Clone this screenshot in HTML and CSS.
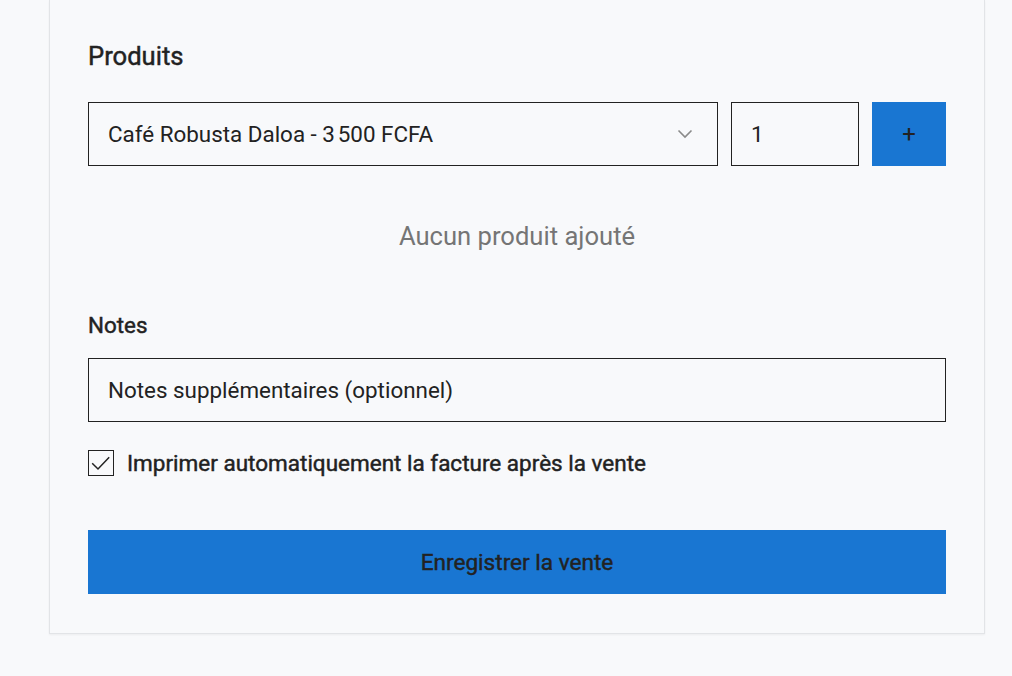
FILE: index.html
```html
<!DOCTYPE html>
<html lang="fr">
<head>
<meta charset="utf-8">
<link rel="stylesheet" href="styles.css">
</head>
<body>
<div class="page">
  <section class="card">
    <h2 class="section-title">Produits</h2>
    <div class="product-row">
      <div class="select">
        <span class="select-text">Café Robusta Daloa - 3&#8239;500 FCFA</span>
        <svg class="chevron" width="16" height="10" viewBox="0 0 16 10"><path d="M1.5 1.5 L8 8 L14.5 1.5" fill="none" stroke="#8a8a8a" stroke-width="1.6"/></svg>
      </div>
      <div class="qty">1</div>
      <button class="add-btn">+</button>
    </div>
    <p class="empty">Aucun produit ajouté</p>
    <h3 class="field-label">Notes</h3>
    <div class="notes">Notes supplémentaires (optionnel)</div>
    <label class="check-row">
      <span class="checkbox"><svg width="24" height="24" viewBox="0 0 24 24"><path d="M3.2 12.2 L9 18 L20.2 6.2" fill="none" stroke="#222" stroke-width="1.5"/></svg></span>
      <span class="check-label">Imprimer automatiquement la facture après la vente</span>
    </label>
    <button class="submit">Enregistrer la vente</button>
  </section>
</div>
</body>
</html>
```

FILE: styles.css
```css
* { box-sizing: border-box; }
html, body {
  margin: 0;
  background: #f8f9fb;
  font-family: Roboto, "Liberation Sans", sans-serif;
  color: #222;
}
.page {
  padding: 0 27px 0 49px;
  height: 676px;
  overflow: hidden;
}
.card {
  width: 936px;
  background: #f8f9fb;
  border: 1px solid #e2e4e7;
  border-top: none;
  box-shadow: 0 1px 2px rgba(0,0,0,0.05);
  padding: 38px 38px 39px 38px;
}
.section-title,
.field-label,
.check-label,
.submit {
  font-weight: 400;
  -webkit-text-stroke: 0.45px currentColor;
}
.section-title {
  margin: 0;
  font-size: 25.6px;
  line-height: 36px;
}
.product-row {
  display: flex;
  gap: 13px;
  margin-top: 28px;
}
.select {
  flex: 1;
  height: 64px;
  border: 1px solid #222;
  display: flex;
  align-items: center;
  justify-content: space-between;
  padding: 0 24px 0 19px;
  font-size: 22.4px;
}
.chevron { display: block; }
.qty {
  width: 128px;
  height: 64px;
  border: 1px solid #222;
  display: flex;
  align-items: center;
  padding-left: 19px;
  font-size: 22.4px;
}
.add-btn {
  width: 74px;
  height: 64px;
  border: none;
  background: #1976d2;
  color: #222;
  font-family: inherit;
  font-size: 24px;
  padding: 0;
}
.empty {
  margin: 54px 0 0;
  text-align: center;
  color: #757575;
  font-size: 25.6px;
  line-height: 32px;
}
.field-label {
  margin: 58px 0 0;
  font-size: 22.4px;
  line-height: 30px;
}
.notes {
  margin-top: 18px;
  height: 64px;
  border: 1px solid #222;
  display: flex;
  align-items: center;
  padding-left: 19px;
  font-size: 22.4px;
}
.check-row {
  display: flex;
  align-items: center;
  gap: 13px;
  margin-top: 28px;
}
.checkbox {
  width: 26px;
  height: 26px;
  border: 1px solid #222;
  display: flex;
  align-items: center;
  justify-content: center;
}
.checkbox svg { display: block; }
.check-label {
  font-size: 22.5px;
}
.submit {
  display: block;
  width: 100%;
  height: 64px;
  margin-top: 54px;
  border: none;
  background: #1976d2;
  color: #222;
  font-family: inherit;
  font-size: 22.6px;
}
```
